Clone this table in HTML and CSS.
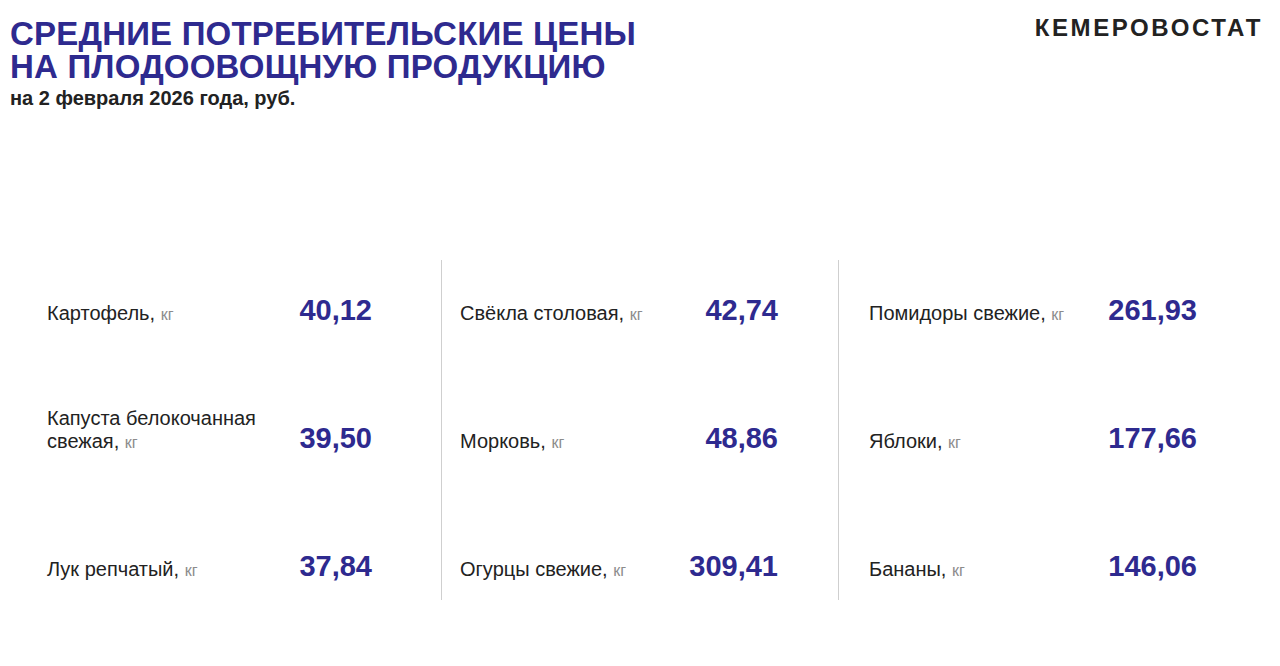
FILE: index.html
```html
<!DOCTYPE html>
<html lang="ru">
<head>
<meta charset="utf-8">
<title>Средние потребительские цены</title>
<link rel="stylesheet" href="styles.css">
</head>
<body>
<header class="header">
  <div class="heading">
    <h1 class="title"><span class="title-line">СРЕДНИЕ ПОТРЕБИТЕЛЬСКИЕ ЦЕНЫ</span><span class="title-line">НА ПЛОДООВОЩНУЮ ПРОДУКЦИЮ</span></h1>
    <p class="subtitle">на 2 февраля 2026 года, руб.</p>
  </div>
  <div class="logo">КЕМЕРОВОСТАТ</div>
</header>
<main class="table">
  <section class="col col-1">
    <div class="row"><span class="label">Картофель, <span class="unit">кг</span></span><span class="value">40,12</span></div>
    <div class="row"><span class="label">Капуста белокочанная свежая, <span class="unit">кг</span></span><span class="value">39,50</span></div>
    <div class="row"><span class="label">Лук репчатый, <span class="unit">кг</span></span><span class="value">37,84</span></div>
  </section>
  <section class="col col-2">
    <div class="row"><span class="label">Свёкла столовая, <span class="unit">кг</span></span><span class="value">42,74</span></div>
    <div class="row"><span class="label">Морковь, <span class="unit">кг</span></span><span class="value">48,86</span></div>
    <div class="row"><span class="label">Огурцы свежие, <span class="unit">кг</span></span><span class="value">309,41</span></div>
  </section>
  <section class="col col-3">
    <div class="row"><span class="label">Помидоры свежие, <span class="unit">кг</span></span><span class="value">261,93</span></div>
    <div class="row"><span class="label">Яблоки, <span class="unit">кг</span></span><span class="value">177,66</span></div>
    <div class="row"><span class="label">Бананы, <span class="unit">кг</span></span><span class="value">146,06</span></div>
  </section>
</main>
</body>
</html>
```
FILE: styles.css
```css
* { box-sizing: border-box; }
html, body { margin: 0; padding: 0; background: #ffffff; }
body {
  width: 1280px;
  height: 666px;
  font-family: "Liberation Sans", Arial, sans-serif;
  color: #222222;
  overflow: hidden;
}
.header {
  display: flex;
  justify-content: space-between;
  align-items: flex-start;
  padding: 17px 20px 0 10px;
}
.title {
  margin: 0;
  font-weight: 700;
  font-size: 33px;
  line-height: 33px;
  color: #2e2a8f;
  letter-spacing: 0.2px;
}
.title-line {
  display: block;
}
.subtitle {
  margin: 4px 0 0;
  font-weight: 700;
  font-size: 20px;
  line-height: 22px;
  color: #222222;
}
.logo {
  margin-top: -3px;
  margin-right: -3px;
  font-weight: 700;
  font-size: 24px;
  line-height: 28px;
  letter-spacing: 2.6px;
  color: #222222;
}
.table {
  display: grid;
  grid-template-columns: 441px 397px 1fr;
  margin-top: 151px;
}
.col {
  display: grid;
  grid-template-rows: 66px 128px 128px;
  padding-bottom: 18px;
}
.col-1 { padding-left: 47px; padding-right: 69px; }
.col-2 { border-left: 1px solid #cfcfcf; padding-left: 18px; padding-right: 60px; }
.col-3 { border-left: 1px solid #cfcfcf; padding-left: 30px; padding-right: 83px; }
.row {
  display: flex;
  justify-content: space-between;
  align-items: flex-end;
}
.label {
  max-width: 240px;
  font-size: 20px;
  line-height: 23px;
  color: #222222;
}
.unit {
  font-size: 16px;
  color: #8c8c8c;
}
.value {
  font-weight: 700;
  font-size: 29px;
  line-height: 32px;
  color: #2e2a8f;
  white-space: nowrap;
}
```
